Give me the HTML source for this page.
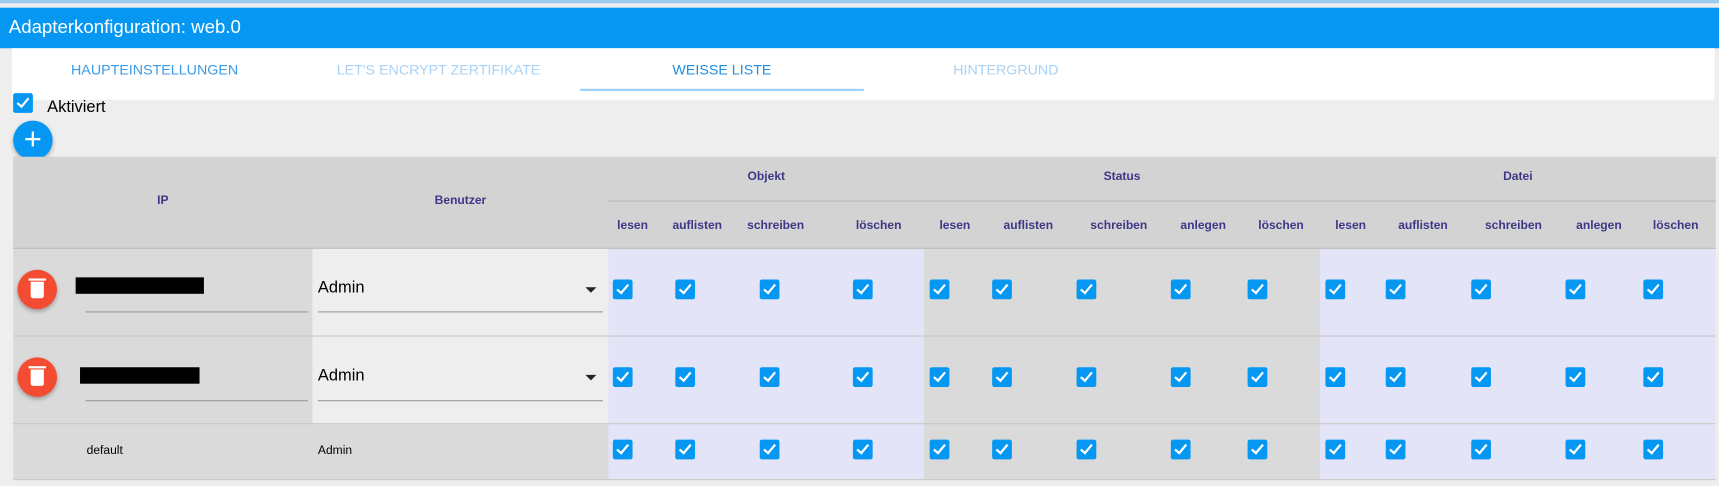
<!DOCTYPE html>
<html><head><meta charset="utf-8"><style>
*{box-sizing:border-box;margin:0;padding:0}
body{width:1719px;height:486px;background:#eeeeee;font-family:"Liberation Sans",sans-serif;position:relative;overflow:hidden}
#w{position:absolute;left:0;top:0;width:1568px;height:443px;transform:scale(1.0963);transform-origin:0 0}
.a{position:absolute}
.cb{position:absolute;width:18px;height:18px;background:#0597f2;border-radius:2px}
.cb:after{content:"";position:absolute;left:6px;top:2px;width:4px;height:9px;border:solid #fff;border-width:0 2px 2px 0;transform:rotate(40deg)}
.h{position:absolute;color:#3d3787;font-weight:bold;font-size:11px;text-align:center}
.tab{position:absolute;top:56px;font-size:13px;color:#3a9ae8;text-align:center}
.del{position:absolute;width:36px;height:36px;border-radius:50%;background:#f44c32;box-shadow:0 2px 4px rgba(0,0,0,.3)}
.del i{position:absolute;left:12px;top:11px;width:12px;height:15px;background:#fff;border-radius:0 0 2px 2px}
.del b{position:absolute;left:10px;top:8px;width:16px;height:2px;background:#fff}
</style></head><body><div id="w">
<div class="a" style="left:0;top:0;width:1568px;height:3px;background:#9ccbf0"></div>
<div class="a" style="left:0;top:7px;width:1568px;height:37px;background:#0597f2"></div>
<div class="a" style="left:8px;top:15px;font-size:17px;color:#fff">Adapterkonfiguration: web.0</div>
<div class="a" style="left:11px;top:44px;width:1553px;height:47px;background:#fff"></div>
<div class="tab" style="left:11px;width:260px">HAUPTEINSTELLUNGEN</div>
<div class="tab" style="left:270px;width:260px;color:#a8d2f5">LET'S ENCRYPT ZERTIFIKATE</div>
<div class="tab" style="left:529px;width:259px;color:#1e8ee6">WEISSE LISTE</div>
<div class="tab" style="left:788px;width:259px;color:#a8d2f5">HINTERGRUND</div>
<div class="a" style="left:529px;top:81px;width:259px;height:2px;background:#9fd0f6"></div>
<div class="cb" style="left:12px;top:85px"></div>
<div class="a" style="left:43px;top:89px;font-size:15px;color:#000">Aktiviert</div>
<div class="a" style="left:12px;top:110px;width:36px;height:36px;border-radius:50%;background:#0597f2;box-shadow:0 2px 4px rgba(0,0,0,.3);color:#fff;font-size:28px;line-height:34px;text-align:center">+</div>

<div class="a" style="left:12px;top:143px;width:1553px;height:84px;background:#d3d3d3;border-bottom:1px solid #b8b8b8"></div>
<div class="a" style="left:555px;top:183px;width:1010px;height:1px;background:#b8b8b8"></div>
<div class="h" style="left:12px;top:177px;width:273px">IP</div>
<div class="h" style="left:285px;top:177px;width:270px">Benutzer</div>
<div class="h" style="left:555px;top:155px;width:288px">Objekt</div>
<div class="h" style="left:843px;top:155px;width:361px">Status</div>
<div class="h" style="left:1204px;top:155px;width:361px">Datei</div>
<div class="h" style="left:557px;top:200px;width:40px">lesen</div>
<div class="h" style="left:611px;top:200px;width:50px">auflisten</div>
<div class="h" style="left:680px;top:200px;width:55px">schreiben</div>
<div class="h" style="left:774px;top:200px;width:55px">löschen</div>
<div class="h" style="left:851px;top:200px;width:40px">lesen</div>
<div class="h" style="left:913px;top:200px;width:50px">auflisten</div>
<div class="h" style="left:993px;top:200px;width:55px">schreiben</div>
<div class="h" style="left:1070px;top:200px;width:55px">anlegen</div>
<div class="h" style="left:1141px;top:200px;width:55px">löschen</div>
<div class="h" style="left:1212px;top:200px;width:40px">lesen</div>
<div class="h" style="left:1273px;top:200px;width:50px">auflisten</div>
<div class="h" style="left:1353px;top:200px;width:55px">schreiben</div>
<div class="h" style="left:1431px;top:200px;width:55px">anlegen</div>
<div class="h" style="left:1501px;top:200px;width:55px">löschen</div>

<div class="a" style="left:12px;top:227px;width:273px;height:160px;background:#dadada"></div>
<div class="a" style="left:285px;top:227px;width:270px;height:160px;background:#eeeeee"></div>
<div class="a" style="left:12px;top:387px;width:543px;height:50px;background:#dadada"></div>
<div class="a" style="left:555px;top:227px;width:288px;height:210px;background:#e4e4f8"></div>
<div class="a" style="left:843px;top:227px;width:361px;height:210px;background:#dadada"></div>
<div class="a" style="left:1204px;top:227px;width:361px;height:210px;background:#e4e4f8"></div>
<div class="a" style="left:12px;top:306px;width:1553px;height:1px;background:#c8c8c8"></div>
<div class="a" style="left:12px;top:386px;width:1553px;height:1px;background:#c8c8c8"></div>
<div class="a" style="left:12px;top:437px;width:1553px;height:1px;background:#c8c8c8"></div>

<div class="del" style="left:16px;top:246px"><b></b><i></i></div>
<div class="a" style="left:69px;top:253px;width:117px;height:15px;background:#000"></div>
<div class="a" style="left:78px;top:284px;width:203px;height:1px;background:#999"></div>
<div class="a" style="left:290px;top:254px;font-size:15px;color:#000">Admin</div>
<div class="a" style="left:534px;top:262px;border-left:5px solid transparent;border-right:5px solid transparent;border-top:5px solid #222"></div>
<div class="a" style="left:290px;top:284px;width:260px;height:1px;background:#999"></div>
<div class="del" style="left:16px;top:326px"><b></b><i></i></div>
<div class="a" style="left:73px;top:335px;width:109px;height:15px;background:#000"></div>
<div class="a" style="left:78px;top:365px;width:203px;height:1px;background:#999"></div>
<div class="a" style="left:290px;top:334px;font-size:15px;color:#000">Admin</div>
<div class="a" style="left:534px;top:342px;border-left:5px solid transparent;border-right:5px solid transparent;border-top:5px solid #222"></div>
<div class="a" style="left:290px;top:365px;width:260px;height:1px;background:#999"></div>
<div class="a" style="left:79px;top:405px;font-size:11px;color:#000">default</div>
<div class="a" style="left:290px;top:405px;font-size:11px;color:#000">Admin</div>

<div class="cb" style="left:559px;top:255px"></div><div class="cb" style="left:616px;top:255px"></div><div class="cb" style="left:693px;top:255px"></div><div class="cb" style="left:778px;top:255px"></div>
<div class="cb" style="left:848px;top:255px"></div><div class="cb" style="left:905px;top:255px"></div><div class="cb" style="left:982px;top:255px"></div><div class="cb" style="left:1068px;top:255px"></div><div class="cb" style="left:1138px;top:255px"></div>
<div class="cb" style="left:1209px;top:255px"></div><div class="cb" style="left:1264px;top:255px"></div><div class="cb" style="left:1342px;top:255px"></div><div class="cb" style="left:1428px;top:255px"></div><div class="cb" style="left:1499px;top:255px"></div>
<div class="cb" style="left:559px;top:335px"></div><div class="cb" style="left:616px;top:335px"></div><div class="cb" style="left:693px;top:335px"></div><div class="cb" style="left:778px;top:335px"></div>
<div class="cb" style="left:848px;top:335px"></div><div class="cb" style="left:905px;top:335px"></div><div class="cb" style="left:982px;top:335px"></div><div class="cb" style="left:1068px;top:335px"></div><div class="cb" style="left:1138px;top:335px"></div>
<div class="cb" style="left:1209px;top:335px"></div><div class="cb" style="left:1264px;top:335px"></div><div class="cb" style="left:1342px;top:335px"></div><div class="cb" style="left:1428px;top:335px"></div><div class="cb" style="left:1499px;top:335px"></div>
<div class="cb" style="left:559px;top:401px"></div><div class="cb" style="left:616px;top:401px"></div><div class="cb" style="left:693px;top:401px"></div><div class="cb" style="left:778px;top:401px"></div>
<div class="cb" style="left:848px;top:401px"></div><div class="cb" style="left:905px;top:401px"></div><div class="cb" style="left:982px;top:401px"></div><div class="cb" style="left:1068px;top:401px"></div><div class="cb" style="left:1138px;top:401px"></div>
<div class="cb" style="left:1209px;top:401px"></div><div class="cb" style="left:1264px;top:401px"></div><div class="cb" style="left:1342px;top:401px"></div><div class="cb" style="left:1428px;top:401px"></div><div class="cb" style="left:1499px;top:401px"></div>
</div></body></html>
